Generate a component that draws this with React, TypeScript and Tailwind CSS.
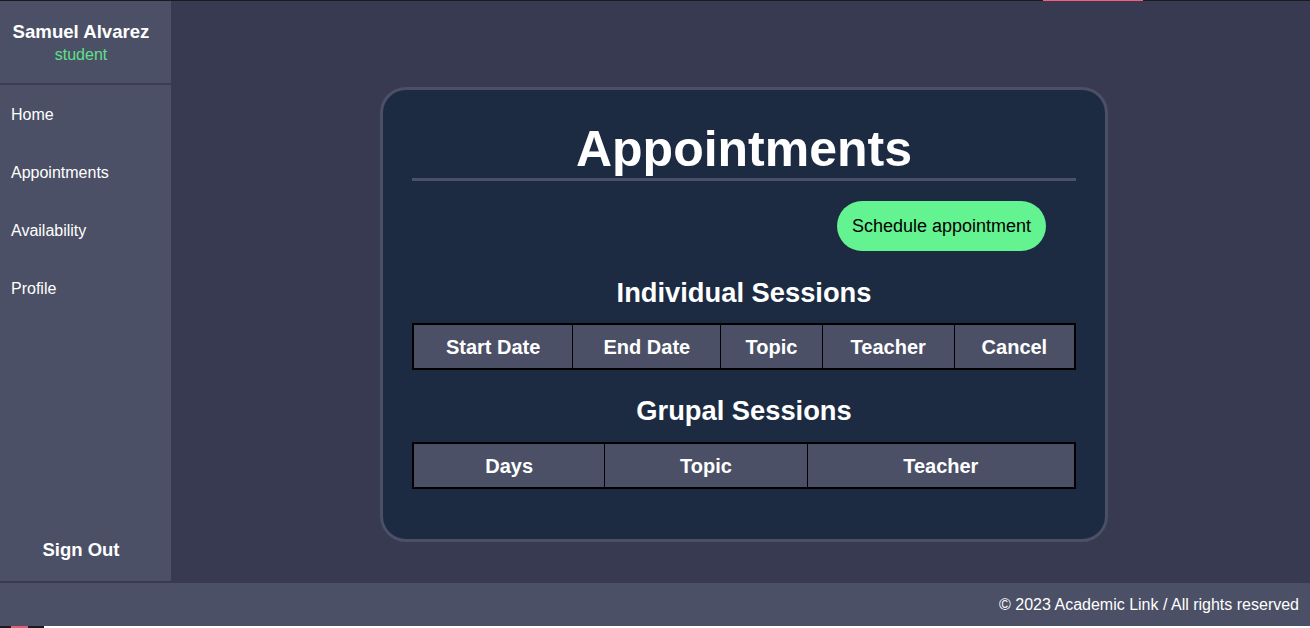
import { useState } from 'react';

const navItems = ['Home', 'Appointments', 'Availability', 'Profile'];

const individualCols = [
  { label: 'Start Date', w: 'w-[158px]' },
  { label: 'End Date', w: 'w-[148px]' },
  { label: 'Topic', w: 'w-[101px]' },
  { label: 'Teacher', w: 'w-[132px]' },
  { label: 'Cancel', w: 'w-[120px]' },
];

const grupalCols = [
  { label: 'Days', w: 'w-[190px]' },
  { label: 'Topic', w: 'w-[202px]' },
  { label: 'Teacher', w: 'w-[267px]' },
];

function SessionTable({ cols }: { cols: { label: string; w: string }[] }) {
  return (
    <table className="w-full table-fixed border-separate border-spacing-0 border-2 border-black">
      <thead>
        <tr className="bg-[#4b5066]">
          {cols.map((c, i) => (
            <th
              key={c.label}
              className={`${c.w} h-[43px] p-0 text-[20px] font-bold text-white text-center ${i > 0 ? 'border-l border-black' : ''}`}
            >
              {c.label}
            </th>
          ))}
        </tr>
      </thead>
      <tbody />
    </table>
  );
}

export default function App() {
  const [active, setActive] = useState('Appointments');

  return (
    <div className="h-[628px] w-full flex flex-col overflow-hidden font-['Liberation_Sans',Arial,sans-serif]">
      {/* top strip */}
      <div className="h-px flex shrink-0">
        <div className="w-[1043px] bg-[#1b1a1f]" />
        <div className="w-[100px] bg-[#ff5c7c]" />
        <div className="flex-1 bg-[#1b1a1f]" />
      </div>

      <div className="h-[582px] flex shrink-0 bg-[#373a50]">
        {/* sidebar */}
        <aside className="w-[171px] h-[580px] bg-[#4b5066] flex flex-col shrink-0">
          <div className="h-[84px] border-b-2 border-[#393c52] pt-[20px] pr-[9px] text-center">
            <div className="text-[18.6px] leading-[22px] font-bold text-white">Samuel Alvarez</div>
            <div className="text-[16px] leading-[24px] text-[#5fe08a]">student</div>
          </div>
          <nav className="flex flex-col pt-px">
            {navItems.map((item) => (
              <button
                key={item}
                onClick={() => setActive(item)}
                className={`h-[58px] pl-[11px] text-left text-[16px] text-white ${active === item ? '' : ''}`}
              >
                {item}
              </button>
            ))}
          </nav>
          <div className="flex-1" />
          <button className="h-[64px] pt-[2px] pr-[9px] text-[18.5px] font-bold text-white text-center">Sign Out</button>
        </aside>

        {/* main */}
        <main className="flex-1 pt-[86px]">
          <div className="ml-[209px] w-[728px] rounded-[26px] border-[3px] border-[#4b5066] bg-[#1c2b42] px-[29px] pt-[31px] pb-[50px]">
            <h1 className="text-[50px] leading-[57px] font-bold text-white text-center border-b-[3px] border-[#4b5066]">
              Appointments
            </h1>
            <div className="mt-[20px] flex justify-end pr-[30px]">
              <button className="h-[50px] w-[209px] rounded-full bg-[#64f391] text-[18px] text-black">
                Schedule appointment
              </button>
            </div>
            <h2 className="mt-[26px] text-[27.3px] leading-[31px] font-bold text-white text-center">Individual Sessions</h2>
            <div className="mt-[15px]">
              <SessionTable cols={individualCols} />
            </div>
            <h2 className="mt-[25px] text-[27.3px] leading-[31px] font-bold text-white text-center">Grupal Sessions</h2>
            <div className="mt-[16px]">
              <SessionTable cols={grupalCols} />
            </div>
          </div>
        </main>
      </div>

      {/* footer */}
      <footer className="h-[43px] shrink-0 bg-[#4b5066] flex items-center justify-end pr-[11px]">
        <span className="text-[16px] text-white">© 2023 Academic Link / All rights reserved</span>
      </footer>

      {/* bottom strip */}
      <div className="h-[2px] flex shrink-0">
        <div className="w-[11px] bg-[#1b1a1f]" />
        <div className="w-[17px] bg-[#e0607a]" />
        <div className="w-[16px] bg-[#1b1a1f]" />
        <div className="flex-1 bg-white" />
      </div>
    </div>
  );
}
